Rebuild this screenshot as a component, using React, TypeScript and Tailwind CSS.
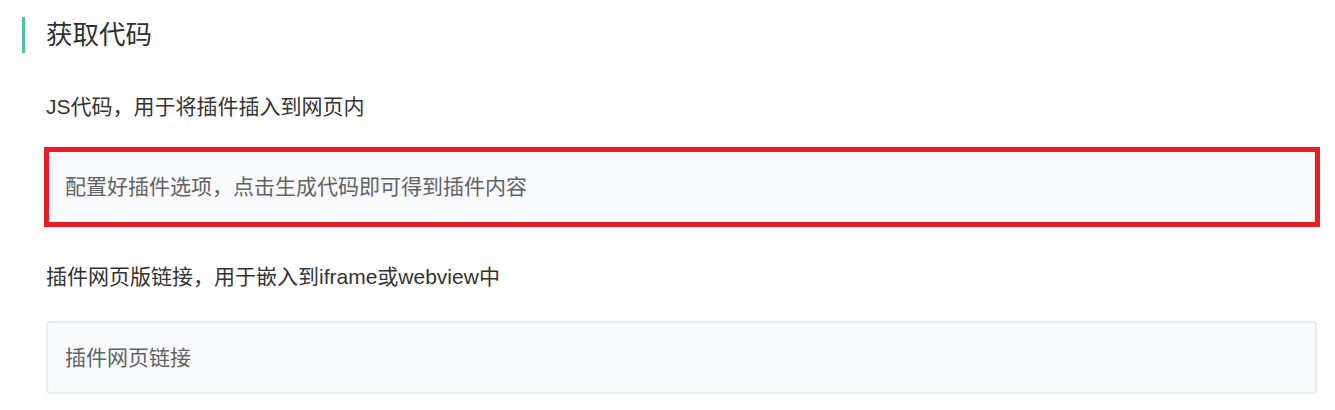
export default function App() {
  const font = { fontFamily: '"Liberation Sans", "Noto Sans CJK SC", sans-serif' }

  return (
    <div className="w-[1335px] h-[410px] bg-white overflow-hidden" style={font}>
      <div className="pl-[22px] pt-[17px]">
        <div className="flex items-center h-[36px] border-l-[3px] border-[#48c4a0] pl-[21px]">
          <h2 className="text-[26.5px] leading-[36px] text-[#303133]">获取代码</h2>
        </div>

        <p className="mt-[40px] ml-[24px] text-[21px] leading-[28px] text-[#333]">
          JS代码，用于将插件插入到网页内
        </p>

        <div className="mt-[26px] ml-[22px] w-[1276px] h-[80px] border-[5px] border-[#ed1c24]">
          <div className="h-full bg-[#f9fafc] border-r border-[#e4e7ed] flex items-center pl-[16px]">
            <span className="text-[21px] text-[#606266]">配置好插件选项，点击生成代码即可得到插件内容</span>
          </div>
        </div>

        <p className="mt-[36px] ml-[24px] text-[21px] leading-[28px] text-[#333]">
          插件网页版链接，用于嵌入到iframe或webview中
        </p>

        <div className="mt-[30px] ml-[24px] w-[1271px] h-[73px] rounded-[4px] border-2 border-[#e8ebf2] bg-[#f9fafc] flex items-center pl-[17px]">
          <span className="text-[21px] text-[#606266]">插件网页链接</span>
        </div>
      </div>
    </div>
  )
}
